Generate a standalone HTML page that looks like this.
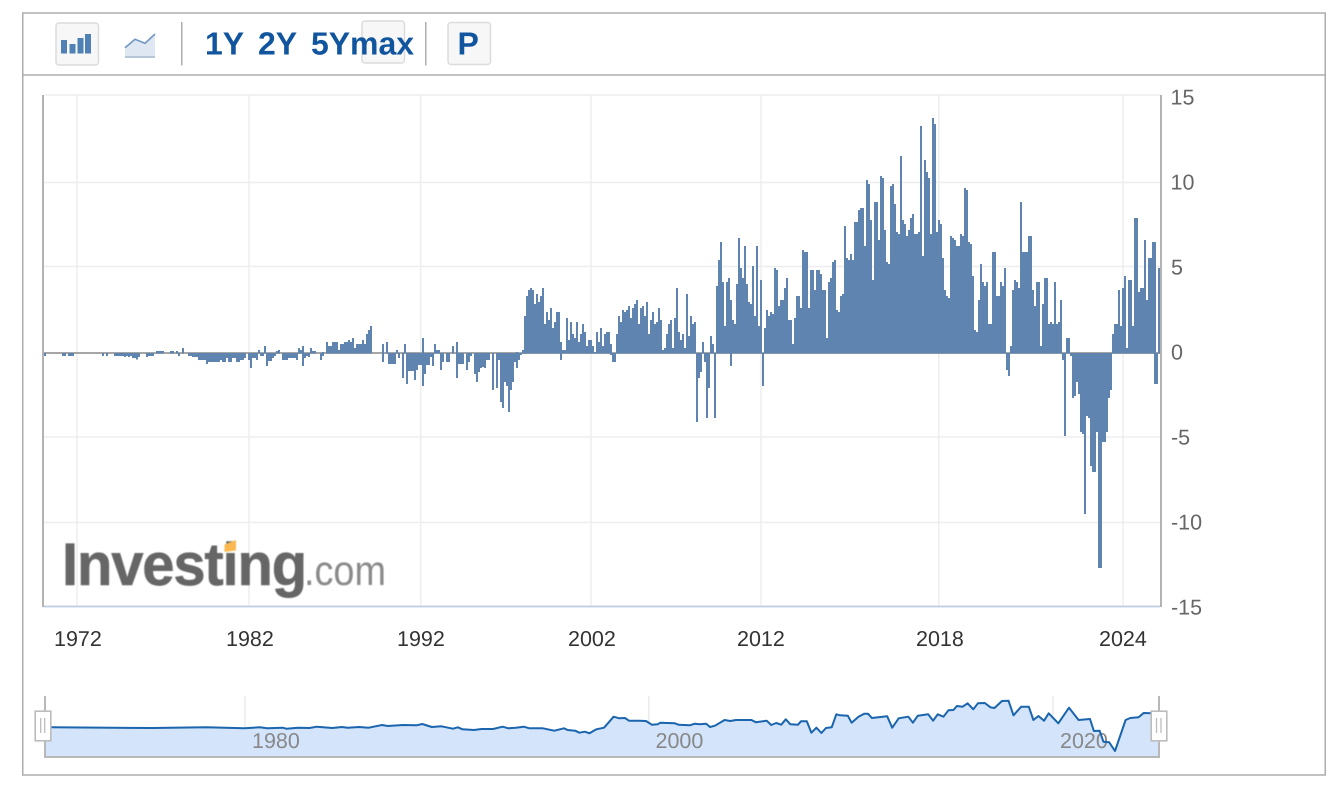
<!DOCTYPE html>
<html><head><meta charset="utf-8"><title>Chart</title>
<style>
html,body{margin:0;padding:0;background:#fff;overflow:hidden}
svg{display:block}
text{font-family:"Liberation Sans",sans-serif;text-rendering:geometricPrecision}
.y{font-size:21.5px;fill:#666}
.x{font-size:21.5px;fill:#333}
.n{font-size:21.5px;fill:#888}
.b{font-size:32px;font-weight:bold;fill:#10559e}
</style></head><body>
<svg width="1342" height="788" viewBox="0 0 1342 788" xmlns="http://www.w3.org/2000/svg">
<rect x="22.75" y="13" width="1302.5" height="762" fill="#fff" stroke="#adadad" stroke-width="1.5"/>
<path d="M23 75H1325" stroke="#adadad" stroke-width="1.5" fill="none"/>

<!-- toolbar -->
<rect x="56" y="23" width="42.5" height="42" rx="3" fill="#f7f7f7" stroke="#dcdcdc" stroke-width="1.5"/>
<path d="M61 40h6v13.5h-6zM69.5 44h6v9.5h-6zM77.5 38h6v15.5h-6zM85 34h6v19.5h-6z" fill="#4f80b6"/>
<path d="M125 47.7L135 39.3L145 43.3L155 34V56H125Z" fill="#dfe8f2"/>
<path d="M125 47.7L135 39.3L145 43.3L155 34" fill="none" stroke="#6f96c2" stroke-width="1.6"/>
<rect x="125" y="56" width="30" height="2" fill="#b8c7d8"/>
<path d="M181.75 22V65.5M425.75 22V65.5" stroke="#adadad" stroke-width="1.5"/>
<rect x="362" y="21" width="42.5" height="42" rx="3" fill="#f7f7f7" stroke="#dcdcdc" stroke-width="1.5"/>
<rect x="448" y="22.5" width="42.5" height="42" rx="3" fill="#f7f7f7" stroke="#dcdcdc" stroke-width="1.5"/>
<text class="b" x="205" y="54.3">1Y</text>
<text class="b" x="258" y="54.3">2Y</text>
<text class="b" x="311" y="54.3">5Y</text>
<text class="b" x="350" y="54.3">max</text>
<text class="b" x="457.5" y="54.3">P</text>

<!-- grid -->
<path d="M44 95H1160M44 182.5H1160M44 266.5H1160M44 437H1160M44 522.5H1160M77 95V606M249 95V606M420.7 95V606M591 95V606M761 95V606M938.7 95V606M1123 95V606" stroke="#eeeeee" stroke-width="1.6" fill="none"/>
<path d="M43 606.5H1160" stroke="#bccde0" stroke-width="1.8" fill="none"/>
<path d="M43 95V607M1161 95V607" stroke="#a6a6a6" stroke-width="1.7" fill="none"/>
<path d="M44 353H1160" stroke="#a6a6a6" stroke-width="2" fill="none"/>

<!-- logo -->
<g style="filter:blur(.5px)">
<text x="62" y="585" font-size="60" font-weight="bold" fill="#666" stroke="#666" stroke-width=".6" letter-spacing="-1.2" textLength="244" lengthAdjust="spacingAndGlyphs">Investing</text>
<path d="M222 546L236 540V551L222 553.5Z" fill="#fff"/>
<path d="M224.5 544.5L236 540V550.5L224.5 552Z" fill="#fbb850"/>
<text x="304" y="585" font-size="42" fill="#8a8a8a" textLength="82" lengthAdjust="spacingAndGlyphs">.com</text>
</g>

<!-- positive bars -->
<path fill="#5f84b0" d="M156 353.5V351H164V353.5M170 353.5V351H174V353.5M176 353.5V351H178V353.5M182 353.5V348H184V353.5
M258 353.5V350H260V353.5M264 353.5V346H266V353.5M276 353.5V351H278V350H280V353.5M298 353.5V348H300V350H302V346H304V353.5M310 353.5V348H312V351H316V353.5M322 353.5V352H324V353.5
M326 353.5V342H328V346H332V342H338V350H340V344H344V342H348V340H350V342H352V338H354V348H356V344H362V340H364V344H366V334H368V330H370V326H372V353.5
M382 353.5V344H384V353.5M386 353.5V342H388V353.5M396 353.5V350H398V353.5M404 353.5V344H406V353.5M422 353.5V338H424V353.5M434 353.5V344H436V350H440V353.5M452 353.5V346H454V353.5M456 353.5V342H458V353.5M516 353.5V352H518V353.5
M522 353.5V350H524V316H526V296H528V290H530V288H532V290H534V304H536V294H538V302H540V296H542V288H544V324H546V312H548V320H550V308H552V328H554V322H556V312H560V342H562V350H566V318H568V340H570V322H572V334H574V338H576V322H578V342H580V334H582V324H584V332H586V346H588V340H592V346H594V352H596V332H598V342H600V328H602V346H604V334H606V332H610V344H612V353.5
M616 353.5V334H618V316H620V322H622V310H624V312H626V310H628V306H630V318H632V308H634V304H636V300H638V324H640V308H642V306H644V316H646V302H648V334H650V320H652V312H654V324H656V322H658V308H660V320H662V350H664V348H666V334H668V324H670V320H672V348H674V318H676V288H678V332H680V340H682V334H684V348H686V294H688V336H690V316H692V324H694V322H696V353.5
M702 353.5V342H704V353.5M710 353.5V336H712V344H714V353.5
M716 353.5V286H718V260H720V242H722V282H724V326H726V282H728V278H730V300H732V320H734V324H736V284H738V238H740V268H742V278H744V246H746V284H748V302H750V304H752V266H754V316H756V246H758V326H760V280H762V353.5
M764 353.5V328H766V310H768V316H770V312H772V314H774V268H776V270H778V306H780V300H784V288H786V278H788V320H792V344H794V318H796V296H800V308H802V250H804V252H808V308H810V270H814V290H816V270H820V274H822V290H826V338H828V282H830V278H832V262H834V260H836V310H838V312H840V296H842V294H844V226H846V258H848V260H850V254H852V260H854V222H858V210H860V208H864V246H866V180H868V184H870V220H872V280H874V202H878V240H880V176H882V178H884V230H886V262H888V264H890V186H892V184H894V204H896V232H898V234H900V156H902V220H904V224H906V236H908V230H910V218H912V214H914V234H918V232H920V126H922V256H924V160H926V172H928V178H930V234H932V118H934V124H936V232H938V220H940V224H942V258H944V290H946V296H948V298H950V236H952V238H954V240H956V246H960V234H962V236H964V188H966V190H968V242H970V244H972V276H974V330H976V332H978V300H980V264H982V282H984V286H986V282H988V324H992V252H996V296H1000V282H1002V286H1004V268H1006V353.5
M1010 353.5V346H1012V290H1014V280H1016V282H1018V288H1020V202H1022V252H1028V236H1032V290H1034V306H1036V282H1040V346H1042V304H1044V278H1048V324H1050V322H1052V324H1054V282H1056V324H1058V322H1060V300H1062V353.5
M1066 353.5V338H1070V353.5
M1112 353.5V334H1114V324H1118V290H1120V326H1122V288H1124V276H1126V348H1128V280H1132V326H1134V218H1138V292H1140V288H1144V240H1146V300H1148V258H1152V242H1156V353.5M1158 353.5V268H1160V353.5Z"/>

<!-- negative bars -->
<path fill="#5f84b0" d="M44 353V356H46V353M62 353V356H66V353M68 353V356H74V353M102 353V356H104V353M106 353V356H108V353
M114 353V356H124V357H126V356H128V357H130V356H132V358H136V359.5H138V357H140V353M146 353V357H148V356H154V353M178 353V356H180V353
M188 353V356H192V357H198V360H206V364H208V362H220V360H222V362H226V358H228V362H232V358H236V362H240V360H244V358H246V353
M248 353V360H250V368H252V358H256V360H258V353M260 353V356H264V353M266 353V366H268V361H272V358H274V356H276V353M282 353V360H288V358H296V360H298V353M302 353V366H304V358H306V356H308V357H310V353M320 353V360H322V356H324V353
M382 353V362H384V353M388 353V364H396V353M398 353V358H400V353M402 353V378H404V353M406 353V384H408V371H414V380H416V370H418V365H422V386H424V374H426V365H430V357H432V366H434V353M440 353V370H442V362H444V353M446 353V362H450V353M456 353V378H458V364H464V353M466 353V370H468V362H470V356H472V353M474 353V374H476V382H478V372H480V368H482V367H484V368H486V360H490V353
M492 353V390H494V353M496 353V388H498V360H500V402H502V408H504V382H506V386H508V412H510V390H512V382H514V362H516V368H518V360H520V355H522V353
M560 353V360H562V353M610 353V355H612V362H616V353M696 353V422H698V378H700V372H702V353M704 353V362H706V418H708V388H710V353M714 353V418H716V353M730 353V366H732V353M762 353V386H764V353M1006 353V370H1008V376H1010V353
M1062 353V360H1064V436H1066V353M1070 353V356H1072V398H1074V396H1076V382H1078V394H1080V432H1082V434H1084V514H1086V416H1088V418H1090V466H1092V472H1096V432H1098V568H1102V442H1106V432H1108V398H1110V390H1112V353M1154 353V384H1158V353Z"/>

<!-- y labels -->
<text class="y" x="1170.5" y="104.3">15</text>
<text class="y" x="1170.5" y="189.3">10</text>
<text class="y" x="1171" y="274.3">5</text>
<text class="y" x="1171" y="359.3">0</text>
<text class="y" x="1171" y="444.3">-5</text>
<text class="y" x="1171" y="529.3">-10</text>
<text class="y" x="1171" y="614.3">-15</text>
<!-- x labels -->
<text class="x" x="54" y="646">1972</text>
<text class="x" x="226" y="646">1982</text>
<text class="x" x="397" y="646">1992</text>
<text class="x" x="568" y="646">2002</text>
<text class="x" x="737" y="646">2012</text>
<text class="x" x="916" y="646">2018</text>
<text class="x" x="1099" y="646">2024</text>

<!-- navigator -->
<path d="M245 696V728M648.8 696V728M1053 696V728" stroke="#ececec" stroke-width="1.5" fill="none"/>
<path fill="#d3e4fb" d="M45 727.3L51.8 727.3L152.5 728L206 727.3L244.3 728.3L259.6 727.3L267.3 728.3L282.6 727.7L286.4 728.7L297.9 727.7L309.4 728L317 726.7L332.3 728L341.9 727L347.6 727.7L359.1 727L368.7 727.7L382.1 725L387.8 726L403.1 725L416.5 725.3L422.3 724L431.8 727L441.4 726.3L452.9 728.7L457.9 727.3L462.5 729.3L473.9 730L481.6 729L493.1 729L502.6 726.7L508.4 728.3L516 727.7L523.7 726.7L529.4 728.3L542.8 728.3L554.3 730.7L563.9 728.3L567.7 730L575.3 730.7L579.2 732.7L584.9 731.7L589.5 733.3L596.4 729.3L604 727.7L607.9 723.3L613.6 716.7L619.3 718.3L625 718L629 720.7L638.5 720.7L646 721L651.8 724.7L657.6 724.3L660.3 722.7L674.8 723.3L678.6 724.7L690 725.3L694.7 723.7L699.7 724.3L706.2 723.7L710 727L715 725.7L724.6 720L730.3 721L736 720L751.4 720L756 722.3L766.7 720.7L771.2 725L776.2 723L781.2 724.7L785.8 719.3L790.4 724.3L798 724.7L801 721.3L806.8 721.3L811.4 732.7L816.4 727.7L821.4 733L826 728L831.7 727.3L836.3 714.3L840 715.3L847.8 715.7L851.6 722.7L858.5 716.7L864.2 713.7L868 713.7L871.9 718L887.2 716.3L892.2 727.7L898.7 718.3L908.3 716.7L912.9 722.7L917.8 715.7L928.2 714.3L933.1 720.7L937.7 714.3L943.5 716.7L948.4 710.3L953.4 710L956.9 706L962.6 706.7L967.6 703.3L973.3 709.3L977.9 703.3L984.8 703L990.5 707.3L994.4 708L1002 701L1008.5 700.7L1013.5 715.3L1021.2 706.7L1028.8 706.7L1033.4 720L1038.4 716L1044.1 720.7L1048.7 713.3L1058.3 723.3L1069 707.7L1078.6 720L1090 719L1093.9 731L1099.6 730.7L1103.4 741.7L1109.2 742.3L1115 751L1125.6 720L1130.2 718L1138.6 717.3L1143.6 713L1159 713.3V757H45Z"/>
<text class="n" x="252" y="748">1980</text>
<text class="n" x="655.5" y="748">2000</text>
<text class="n" x="1060" y="748">2020</text>
<path fill="none" stroke="#1a65ad" stroke-width="2" stroke-linejoin="round" d="M45 727.3L51.8 727.3L152.5 728L206 727.3L244.3 728.3L259.6 727.3L267.3 728.3L282.6 727.7L286.4 728.7L297.9 727.7L309.4 728L317 726.7L332.3 728L341.9 727L347.6 727.7L359.1 727L368.7 727.7L382.1 725L387.8 726L403.1 725L416.5 725.3L422.3 724L431.8 727L441.4 726.3L452.9 728.7L457.9 727.3L462.5 729.3L473.9 730L481.6 729L493.1 729L502.6 726.7L508.4 728.3L516 727.7L523.7 726.7L529.4 728.3L542.8 728.3L554.3 730.7L563.9 728.3L567.7 730L575.3 730.7L579.2 732.7L584.9 731.7L589.5 733.3L596.4 729.3L604 727.7L607.9 723.3L613.6 716.7L619.3 718.3L625 718L629 720.7L638.5 720.7L646 721L651.8 724.7L657.6 724.3L660.3 722.7L674.8 723.3L678.6 724.7L690 725.3L694.7 723.7L699.7 724.3L706.2 723.7L710 727L715 725.7L724.6 720L730.3 721L736 720L751.4 720L756 722.3L766.7 720.7L771.2 725L776.2 723L781.2 724.7L785.8 719.3L790.4 724.3L798 724.7L801 721.3L806.8 721.3L811.4 732.7L816.4 727.7L821.4 733L826 728L831.7 727.3L836.3 714.3L840 715.3L847.8 715.7L851.6 722.7L858.5 716.7L864.2 713.7L868 713.7L871.9 718L887.2 716.3L892.2 727.7L898.7 718.3L908.3 716.7L912.9 722.7L917.8 715.7L928.2 714.3L933.1 720.7L937.7 714.3L943.5 716.7L948.4 710.3L953.4 710L956.9 706L962.6 706.7L967.6 703.3L973.3 709.3L977.9 703.3L984.8 703L990.5 707.3L994.4 708L1002 701L1008.5 700.7L1013.5 715.3L1021.2 706.7L1028.8 706.7L1033.4 720L1038.4 716L1044.1 720.7L1048.7 713.3L1058.3 723.3L1069 707.7L1078.6 720L1090 719L1093.9 731L1099.6 730.7L1103.4 741.7L1109.2 742.3L1115 751L1125.6 720L1130.2 718L1138.6 717.3L1143.6 713L1152 713.3"/>
<path d="M45 696V757H1159V696" fill="none" stroke="#b8b8b8" stroke-width="2"/>
<rect x="35.2" y="711.2" width="15.6" height="29.6" fill="#fff" stroke="#bcbcbc" stroke-width="1.6"/>
<path d="M40.7 718V733M44.7 718V733" stroke="#bcbcbc" stroke-width="1.3"/>
<rect x="1151.2" y="711.2" width="15.6" height="29.6" fill="#fff" stroke="#bcbcbc" stroke-width="1.6"/>
<path d="M1156.5 718V733M1161 718V733" stroke="#bcbcbc" stroke-width="1.3"/>
</svg>
</body></html>
